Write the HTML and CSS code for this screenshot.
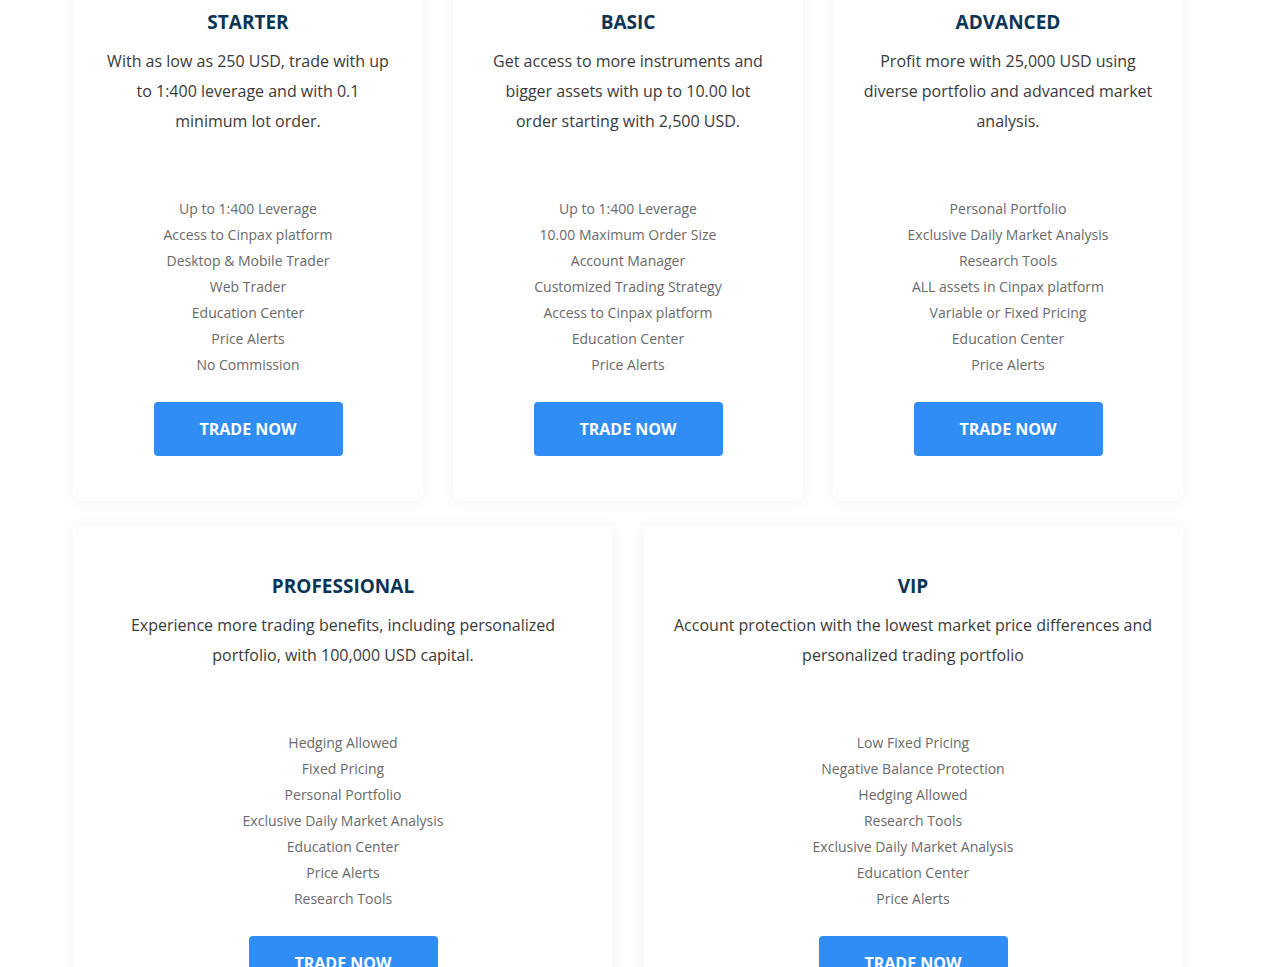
FILE: index.html
```html
<!DOCTYPE html>
<html lang="en">
<head>
<meta charset="utf-8">
<title>Account Types</title>
<link rel="stylesheet" href="styles.css">
</head>
<body>
<div class="plans">
  <div class="row row-3">
    <div class="card">
      <h3 class="title">STARTER</h3>
      <p class="desc">With as low as 250 USD, trade with up to 1:400 leverage and with 0.1 minimum lot order.</p>
      <ul class="features">
        <li>Up to 1:400 Leverage</li>
        <li>Access to Cinpax platform</li>
        <li>Desktop &amp; Mobile Trader</li>
        <li>Web Trader</li>
        <li>Education Center</li>
        <li>Price Alerts</li>
        <li>No Commission</li>
      </ul>
      <a class="btn" href="#">TRADE NOW</a>
    </div>
    <div class="card">
      <h3 class="title">BASIC</h3>
      <p class="desc">Get access to more instruments and bigger assets with up to 10.00 lot order starting with 2,500 USD.</p>
      <ul class="features">
        <li>Up to 1:400 Leverage</li>
        <li>10.00 Maximum Order Size</li>
        <li>Account Manager</li>
        <li>Customized Trading Strategy</li>
        <li>Access to Cinpax platform</li>
        <li>Education Center</li>
        <li>Price Alerts</li>
      </ul>
      <a class="btn" href="#">TRADE NOW</a>
    </div>
    <div class="card">
      <h3 class="title">ADVANCED</h3>
      <p class="desc">Profit more with 25,000 USD using diverse portfolio and advanced market analysis.</p>
      <ul class="features">
        <li>Personal Portfolio</li>
        <li>Exclusive Daily Market Analysis</li>
        <li>Research Tools</li>
        <li>ALL assets in Cinpax platform</li>
        <li>Variable or Fixed Pricing</li>
        <li>Education Center</li>
        <li>Price Alerts</li>
      </ul>
      <a class="btn" href="#">TRADE NOW</a>
    </div>
  </div>
  <div class="row row-2">
    <div class="card">
      <h3 class="title">PROFESSIONAL</h3>
      <p class="desc">Experience more trading benefits, including personalized portfolio, with 100,000 USD capital.</p>
      <ul class="features">
        <li>Hedging Allowed</li>
        <li>Fixed Pricing</li>
        <li>Personal Portfolio</li>
        <li>Exclusive Daily Market Analysis</li>
        <li>Education Center</li>
        <li>Price Alerts</li>
        <li>Research Tools</li>
      </ul>
      <a class="btn" href="#">TRADE NOW</a>
    </div>
    <div class="card">
      <h3 class="title">VIP</h3>
      <p class="desc">Account protection with the lowest market price differences and personalized trading portfolio</p>
      <ul class="features">
        <li>Low Fixed Pricing</li>
        <li>Negative Balance Protection</li>
        <li>Hedging Allowed</li>
        <li>Research Tools</li>
        <li>Exclusive Daily Market Analysis</li>
        <li>Education Center</li>
        <li>Price Alerts</li>
      </ul>
      <a class="btn" href="#">TRADE NOW</a>
    </div>
  </div>
</div>
</body>
</html>
```
FILE: styles.css
```css
* { box-sizing: border-box; }

html, body {
  margin: 0;
  padding: 0;
  background: #ffffff;
  font-family: "Open Sans", "Liberation Sans", sans-serif;
  overflow: hidden;
}

.plans {
  width: 1110px;
  margin: -38px 0 0 73px;
  display: flex;
  flex-direction: column;
  gap: 25px;
}

.row {
  display: grid;
  gap: 30px;
}
.row-3 { grid-template-columns: repeat(3, 1fr); }
.row-2 { grid-template-columns: repeat(2, 1fr); }

.card {
  background: #ffffff;
  box-shadow: 0 0 12px rgba(0, 0, 0, 0.06);
  padding: 48px 30px 45px;
  display: flex;
  flex-direction: column;
  align-items: center;
  text-align: center;
}

.title {
  margin: 0;
  font-size: 19px;
  line-height: 24px;
  font-weight: 700;
  color: #0b3556;
  letter-spacing: 0;
}

.desc {
  margin: 12px 0 0;
  font-size: 16px;
  line-height: 30px;
  color: #3a3a3a;
}

.features {
  list-style: none;
  margin: 60px 0 0;
  padding: 0;
  font-size: 14px;
  line-height: 26px;
  color: #6a6a6a;
}

.btn {
  margin-top: 24px;
  width: 189px;
  height: 54px;
  display: flex;
  align-items: center;
  justify-content: center;
  background: #2f8df5;
  color: #ffffff;
  border-radius: 4px;
  font-size: 16px;
  font-weight: 700;
  text-decoration: none;
}
```
